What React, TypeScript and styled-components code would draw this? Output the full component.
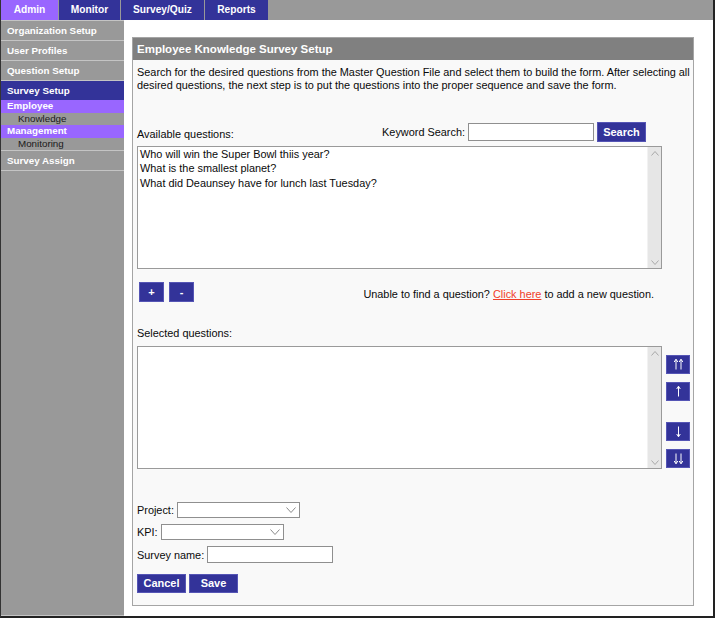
import React from "react";
import styled, { createGlobalStyle } from "styled-components";

const Global = createGlobalStyle`
  html, body { margin: 0; padding: 0; background: #fff; }
  body { font-family: "Liberation Sans", Arial, sans-serif; color: #111; }
  * { box-sizing: border-box; }
`;

const NAVY = "#333399";
const PURPLE = "#9966ff";

const Frame = styled.div`
  width: 715px;
  height: 618px;
  display: flex;
  flex-direction: column;
  border-left: 1px solid #333;
  border-right: 2px solid #222;
  border-bottom: 2px solid #222;
  background: #fff;
  overflow: hidden;
`;

const TabBar = styled.div`
  height: 20px;
  flex: none;
  display: flex;
  gap: 1px;
  background: #999;
`;

const Tab = styled.div<{ $w: number; $active?: boolean }>`
  width: ${(p) => p.$w}px;
  height: 20px;
  line-height: 20px;
  text-align: center;
  font-size: 10.2px;
  font-weight: bold;
  color: #fff;
  background: ${(p) => (p.$active ? PURPLE : NAVY)};
`;

const Body = styled.div`
  flex: 1;
  display: flex;
  min-height: 0;
`;

const Sidebar = styled.nav`
  width: 123px;
  flex: none;
  background: #999;
  display: flex;
  flex-direction: column;
  border-bottom: 1px solid #c4c4c4;
`;

const NavList = styled.div`
  display: flex;
  flex-direction: column;
  border-bottom: 1px solid #c4c4c4;
`;

const NavItem = styled.div<{ $active?: boolean }>`
  height: 20px;
  border-top: 1px solid #c4c4c4;
  padding-left: 6px;
  line-height: 19px;
  font-size: 9.8px;
  font-weight: bold;
  color: #fff;
  background: ${(p) => (p.$active ? NAVY : "transparent")};
`;

const SubHeading = styled.div`
  height: 12.5px;
  line-height: 12.5px;
  padding-left: 6px;
  font-size: 9.8px;
  font-weight: bold;
  color: #fff;
  background: ${PURPLE};
`;

const SubItem = styled.div`
  height: 12.5px;
  line-height: 12.5px;
  padding-left: 17px;
  font-size: 9.8px;
  color: #1a1a1a;
`;

const Main = styled.main`
  flex: 1;
  display: flex;
  padding: 17px 19px 10px 8px;
  background: #fff;
`;

const Panel = styled.section`
  flex: 1;
  display: flex;
  flex-direction: column;
  border: 1px solid #a5a5a5;
  background: #f9f9f9;
`;

const PanelHeader = styled.h1`
  margin: 0;
  height: 22px;
  line-height: 22px;
  padding-left: 4px;
  background: #808080;
  color: #fff;
  font-size: 11.5px;
  font-weight: bold;
`;

const PanelBody = styled.div`
  display: flex;
  flex-direction: column;
  padding: 6px 0 0 4px;
  font-size: 10.9px;
  color: #0a0a0a;
`;

const Description = styled.p`
  margin: 0;
  line-height: 12.5px;
`;

const SearchRow = styled.div`
  width: 525px;
  height: 20px;
  margin-top: 31px;
  display: flex;
  justify-content: space-between;
`;

const Label = styled.span<{ $top?: number }>`
  line-height: 14px;
  padding-top: ${(p) => p.$top ?? 0}px;
  white-space: nowrap;
`;

const SearchGroup = styled.div`
  display: flex;
  align-items: center;
  margin-right: 16px;
`;

const TextInput = styled.input<{ $w: number; $h: number }>`
  width: ${(p) => p.$w}px;
  height: ${(p) => p.$h}px;
  border: 1px solid #8f8f8f;
  background: #fff;
  padding: 0 2px;
  margin: 0;
  font: inherit;
`;

const NavyButton = styled.button<{ $w: number; $h: number }>`
  width: ${(p) => p.$w}px;
  height: ${(p) => p.$h}px;
  margin: 0;
  padding: 0;
  border: 1px solid #5555b5;
  background: ${NAVY};
  color: #fff;
  font-family: "Liberation Sans", Arial, sans-serif;
  font-size: 11px;
  font-weight: bold;
  line-height: 1;
  display: flex;
  align-items: center;
  justify-content: center;
`;

const ListBox = styled.div<{ $mt: number }>`
  width: 525px;
  height: 123px;
  margin-top: ${(p) => p.$mt}px;
  flex: none;
  display: flex;
  border: 1px solid #9a9a9a;
  background: #fff;
`;

const ListItems = styled.ul`
  flex: 1;
  margin: 0;
  padding: 0 2px;
  list-style: none;
  line-height: 14.3px;
`;

const ScrollTrack = styled.div`
  width: 14px;
  flex: none;
  background: #e6e6e6;
  border-left: 1px solid #f2f2f2;
  display: flex;
  flex-direction: column;
  justify-content: space-between;
  align-items: center;
  padding: 4px 0 3px;
`;

const ActionRow = styled.div`
  width: 525px;
  height: 20px;
  margin-top: 13px;
  padding: 0 8px 0 2px;
  display: flex;
  align-items: center;
  justify-content: space-between;
`;

const ButtonPair = styled.div`
  display: flex;
  gap: 5px;
`;

const Hint = styled.span`
  padding-top: 3px;
  line-height: 14px;
`;

const LinkText = styled.a`
  color: #f0402a;
  text-decoration: underline;
`;

const SelectedLabel = styled.div`
  margin-top: 24px;
  line-height: 14px;
`;

const ListRow = styled.div`
  display: flex;
  gap: 4px;
  margin-top: 6px;
`;

const ArrowColumn = styled.div`
  display: flex;
  flex-direction: column;
  padding-top: 9px;
`;

const ArrowButton = styled(NavyButton)<{ $gap: number }>`
  margin-top: ${(p) => p.$gap}px;
`;

const FieldRow = styled.div<{ $mt: number }>`
  display: flex;
  align-items: center;
  gap: 3px;
  margin-top: ${(p) => p.$mt}px;
`;

const FakeSelect = styled.div<{ $w: number }>`
  width: ${(p) => p.$w}px;
  height: 16px;
  border: 1px solid #8f8f8f;
  background: #fff;
  display: flex;
  align-items: center;
  justify-content: flex-end;
  padding-right: 3px;
`;

const FormButtons = styled.div`
  display: flex;
  gap: 3px;
  margin-top: 11px;
`;

const Chevron = ({ up, w = 8, h = 5, color = "#a8a8a8" }: { up?: boolean; w?: number; h?: number; color?: string }) => (
  <svg width={w} height={h} viewBox={`0 0 ${w} ${h}`}>
    <polyline
      points={up ? `0.5,${h - 0.5} ${w / 2},0.5 ${w - 0.5},${h - 0.5}` : `0.5,0.5 ${w / 2},${h - 0.5} ${w - 0.5},0.5`}
      fill="none"
      stroke={color}
      strokeWidth="1"
    />
  </svg>
);

const Arrows = ({ up, count }: { up: boolean; count: number }) => {
  const xs = count === 2 ? [4, 9] : [6.5];
  return (
    <svg width="13" height="13" viewBox="0 0 13 13">
      {xs.map((x) => (
        <g key={x} stroke="#fff" strokeWidth="1" fill="none">
          <line x1={x} y1={1.5} x2={x} y2={11.5} />
          {up ? (
            <polyline points={`${x - 1.8},4 ${x},1.2 ${x + 1.8},4`} />
          ) : (
            <polyline points={`${x - 1.8},9 ${x},11.8 ${x + 1.8},9`} />
          )}
        </g>
      ))}
    </svg>
  );
};

const Scroll = () => (
  <ScrollTrack>
    <Chevron up w={8} h={5} />
    <Chevron w={8} h={5} />
  </ScrollTrack>
);

export default function App() {
  return (
    <>
      <Global />
      <Frame>
        <TabBar>
          <Tab $w={57} $active>Admin</Tab>
          <Tab $w={61}>Monitor</Tab>
          <Tab $w={83}>Survey/Quiz</Tab>
          <Tab $w={63}>Reports</Tab>
        </TabBar>
        <Body>
          <Sidebar>
            <NavList>
              <NavItem>Organization Setup</NavItem>
              <NavItem>User Profiles</NavItem>
              <NavItem>Question Setup</NavItem>
              <NavItem $active>Survey Setup</NavItem>
              <SubHeading>Employee</SubHeading>
              <SubItem>Knowledge</SubItem>
              <SubHeading>Management</SubHeading>
              <SubItem>Monitoring</SubItem>
              <NavItem>Survey Assign</NavItem>
            </NavList>
          </Sidebar>
          <Main>
            <Panel>
              <PanelHeader>Employee Knowledge Survey Setup</PanelHeader>
              <PanelBody>
                <Description>
                  Search for the desired questions from the Master Question File and select them to build the form. After selecting all
                  desired questions, the next step is to put the questions into the proper sequence and save the form.
                </Description>
                <SearchRow>
                  <Label $top={5}>Available questions:</Label>
                  <SearchGroup>
                    <Label>Keyword Search:</Label>
                    <TextInput $w={126} $h={18} style={{ marginLeft: 3 }} />
                    <NavyButton $w={49} $h={20} style={{ marginLeft: 3 }}>Search</NavyButton>
                  </SearchGroup>
                </SearchRow>
                <ListBox $mt={4}>
                  <ListItems>
                    <li>Who will win the Super Bowl thiis year?</li>
                    <li>What is the smallest planet?</li>
                    <li>What did Deaunsey have for lunch last Tuesday?</li>
                  </ListItems>
                  <Scroll />
                </ListBox>
                <ActionRow>
                  <ButtonPair>
                    <NavyButton $w={25} $h={20}>+</NavyButton>
                    <NavyButton $w={25} $h={20}>-</NavyButton>
                  </ButtonPair>
                  <Hint>
                    Unable to find a question? <LinkText>Click here</LinkText> to add a new question.
                  </Hint>
                </ActionRow>
                <SelectedLabel>Selected questions:</SelectedLabel>
                <ListRow>
                  <ListBox $mt={0}>
                    <ListItems />
                    <Scroll />
                  </ListBox>
                  <ArrowColumn>
                    <ArrowButton $w={24} $h={19} $gap={0}><Arrows up count={2} /></ArrowButton>
                    <ArrowButton $w={24} $h={19} $gap={8}><Arrows up count={1} /></ArrowButton>
                    <ArrowButton $w={24} $h={19} $gap={21}><Arrows up={false} count={1} /></ArrowButton>
                    <ArrowButton $w={24} $h={19} $gap={8}><Arrows up={false} count={2} /></ArrowButton>
                  </ArrowColumn>
                </ListRow>
                <FieldRow $mt={33}>
                  <Label>Project:</Label>
                  <FakeSelect $w={123}><Chevron w={10} h={6} color="#8a8a8a" /></FakeSelect>
                </FieldRow>
                <FieldRow $mt={6}>
                  <Label>KPI:</Label>
                  <FakeSelect $w={123}><Chevron w={10} h={6} color="#8a8a8a" /></FakeSelect>
                </FieldRow>
                <FieldRow $mt={6}>
                  <Label>Survey name:</Label>
                  <TextInput $w={126} $h={17} />
                </FieldRow>
                <FormButtons>
                  <NavyButton $w={49} $h={19}>Cancel</NavyButton>
                  <NavyButton $w={49} $h={19}>Save</NavyButton>
                </FormButtons>
              </PanelBody>
            </Panel>
          </Main>
        </Body>
      </Frame>
    </>
  );
}
